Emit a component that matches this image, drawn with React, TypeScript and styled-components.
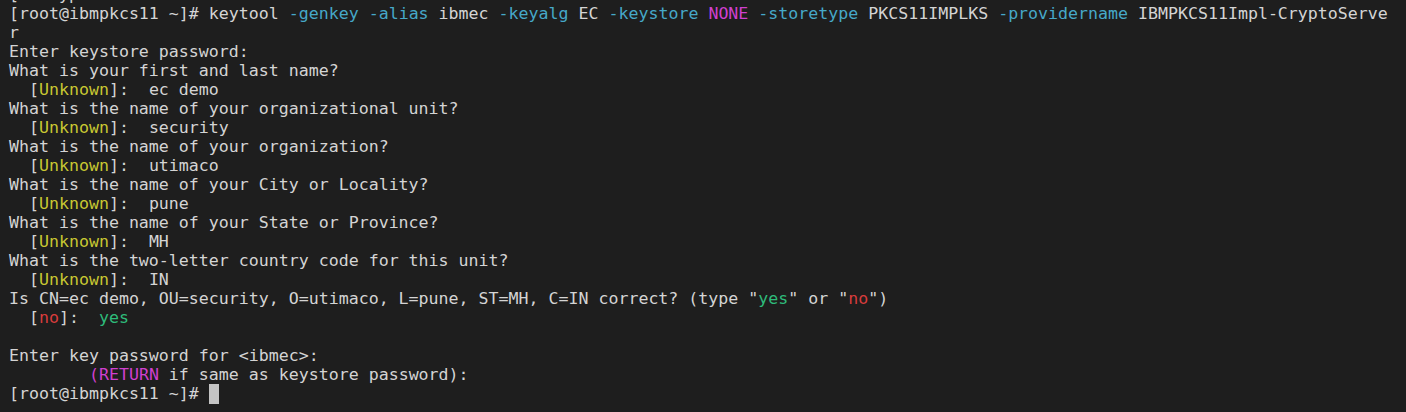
import React from "react";
import styled, { createGlobalStyle } from "styled-components";

const Global = createGlobalStyle`
  html, body { margin: 0; padding: 0; background: #1e1e1e; }
  body { width: 1406px; height: 412px; overflow: hidden; }
`;

const Terminal = styled.div`
  width: 1406px;
  height: 412px;
  overflow: hidden;
  background: #1e1e1e;
  box-sizing: border-box;
  padding-left: 9px;
  font-family: "DejaVu Sans Mono", monospace;
  font-size: 16.6px;
  color: #d4d4d4;
`;

const Screen = styled.div`
  display: flex;
  flex-direction: column;
  margin-top: -15px;
`;

const Line = styled.div`
  height: 19px;
  line-height: 19px;
  white-space: pre;
`;

type Tone = "cyan" | "magenta" | "yellow" | "red" | "green";
const tones: Record<Tone, string> = {
  cyan: "#46a8c8",
  magenta: "#d040d0",
  yellow: "#c8c832",
  red: "#d83c3c",
  green: "#2ebb7a",
};

const C = styled.span<{ $t: Tone }>`
  color: ${(p) => tones[p.$t]};
`;

const Cursor = styled.span`
  display: inline-block;
  width: 10px;
  height: 20px;
  background: #c4c4c4;
  vertical-align: -5px;
`;

const Unknown = ({ v }: { v: string }) => (
  <Line>
    {"  ["}
    <C $t="yellow">Unknown</C>
    {"]:  " + v}
  </Line>
);

export default function App() {
  return (
    <>
      <Global />
      <Terminal>
        <Screen>
          <Line>{"[    yp"}</Line>
          <Line>
            {"[root@ibmpkcs11 ~]# keytool "}
            <C $t="cyan">-genkey</C>{" "}
            <C $t="cyan">-alias</C>{" ibmec "}
            <C $t="cyan">-keyalg</C>{" EC "}
            <C $t="cyan">-keystore</C>{" "}
            <C $t="magenta">NONE</C>{" "}
            <C $t="cyan">-storetype</C>{" PKCS11IMPLKS "}
            <C $t="cyan">-providername</C>{" IBMPKCS11Impl-CryptoServe"}
          </Line>
          <Line>r</Line>
          <Line>Enter keystore password:</Line>
          <Line>What is your first and last name?</Line>
          <Unknown v="ec demo" />
          <Line>What is the name of your organizational unit?</Line>
          <Unknown v="security" />
          <Line>What is the name of your organization?</Line>
          <Unknown v="utimaco" />
          <Line>What is the name of your City or Locality?</Line>
          <Unknown v="pune" />
          <Line>What is the name of your State or Province?</Line>
          <Unknown v="MH" />
          <Line>What is the two-letter country code for this unit?</Line>
          <Unknown v="IN" />
          <Line>
            {'Is CN=ec demo, OU=security, O=utimaco, L=pune, ST=MH, C=IN correct? (type "'}
            <C $t="green">yes</C>
            {'" or "'}
            <C $t="red">no</C>
            {'")'}
          </Line>
          <Line>
            {"  ["}
            <C $t="red">no</C>
            {"]:  "}
            <C $t="green">yes</C>
          </Line>
          <Line>{" "}</Line>
          <Line>{"Enter key password for <ibmec>:"}</Line>
          <Line>
            {"        "}
            <C $t="magenta">(RETURN</C>
            {" if same as keystore password):"}
          </Line>
          <Line>
            {"[root@ibmpkcs11 ~]# "}
            <Cursor />
          </Line>
        </Screen>
      </Terminal>
    </>
  );
}
